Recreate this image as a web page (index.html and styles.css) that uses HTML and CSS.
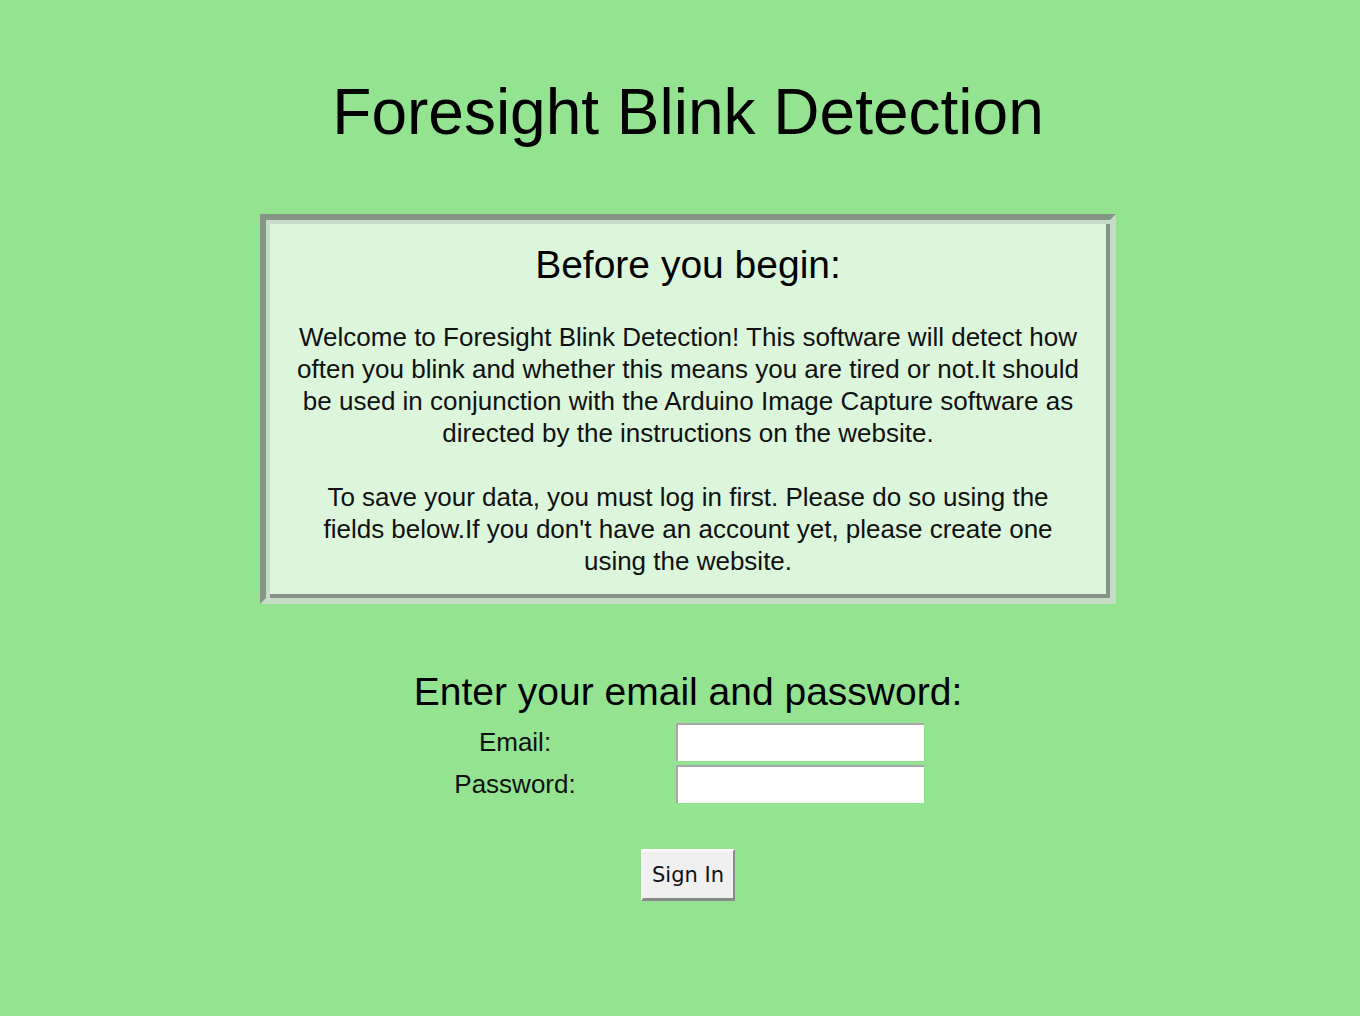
FILE: index.html
```html
<!DOCTYPE html>
<html lang="en">
<head>
<meta charset="utf-8">
<title>Foresight Blink Detection</title>
<link rel="stylesheet" href="styles.css">
</head>
<body>
<div class="page">
  <h1 class="title">Foresight Blink Detection</h1>
  <section class="intro">
    <h2 class="intro-heading">Before you begin:</h2>
    <p class="intro-text">Welcome to Foresight Blink Detection! This software will detect how often you blink and whether this means you are tired or not.It should be used in conjunction with the Arduino Image Capture software as directed by the instructions on the website.</p>
    <p class="intro-text">To save your data, you must log in first. Please do so using the fields below.If you don't have an account yet, please create one using the website.</p>
  </section>
  <section class="login">
    <h2 class="login-heading">Enter your email and password:</h2>
    <form class="fields">
      <label class="field-label" for="email">Email:</label>
      <input class="field-input" id="email" type="text">
      <label class="field-label" for="password">Password:</label>
      <input class="field-input" id="password" type="password">
    </form>
    <button class="sign-in" type="button">Sign In</button>
  </section>
</div>
</body>
</html>
```

FILE: styles.css
```css
html, body {
  margin: 0;
  padding: 0;
  background: #94e391;
}

body {
  font-family: "Liberation Sans", Arial, sans-serif;
  color: #111;
}

.page {
  box-sizing: border-box;
  width: 1360px;
  min-height: 1016px;
  padding-left: 16px;
  display: flex;
  flex-direction: column;
  align-items: center;
}

.title {
  margin: 75px 0 0;
  font-size: 64px;
  font-weight: normal;
  line-height: normal;
  color: #000;
}

.intro {
  box-sizing: border-box;
  width: 856px;
  margin-top: 65px;
  padding: 23px 31px 21px;
  background: #dcf6dc;
  border: 6px solid;
  border-color: #869486 #c6dcc6 #c6dcc6 #869486;
  box-shadow: inset 4px 4px 0 #c6dcc6, inset -4px -4px 0 #869486;
  text-align: center;
}

.intro-heading {
  margin: 0;
  font-size: 39px;
  font-weight: normal;
  line-height: normal;
  color: #000;
}

.intro-text {
  margin: 34px 0 0;
  font-size: 26px;
  line-height: 32px;
}

.intro-text + .intro-text {
  margin-top: 32px;
}

.login {
  margin-top: 66px;
  display: flex;
  flex-direction: column;
  align-items: center;
}

.login-heading {
  margin: 0;
  font-size: 39px;
  font-weight: normal;
  line-height: normal;
  color: #000;
}

.fields {
  margin: 9px 0 0;
  display: grid;
  grid-template-columns: 126px 248px;
  column-gap: 98px;
  row-gap: 4px;
}

.field-label {
  align-self: center;
  text-align: center;
  white-space: nowrap;
  font-size: 26px;
  line-height: 30px;
}

.field-input {
  box-sizing: border-box;
  width: 248px;
  height: 38px;
  margin: 0;
  padding: 0 4px;
  background: #fff;
  border-style: solid;
  border-width: 2px 0 0 2px;
  border-color: #a8a8a8;
  outline: none;
}

.sign-in {
  box-sizing: border-box;
  width: 94px;
  height: 52px;
  margin-top: 46px;
  padding: 0;
  background: #f0f0f0;
  border-style: solid;
  border-width: 2px 2px 3px 2px;
  border-color: #ffffff #8a8a8a #8a8a8a #ffffff;
  font-family: "DejaVu Sans", Tahoma, sans-serif;
  font-size: 21px;
  color: #111;
}
```
